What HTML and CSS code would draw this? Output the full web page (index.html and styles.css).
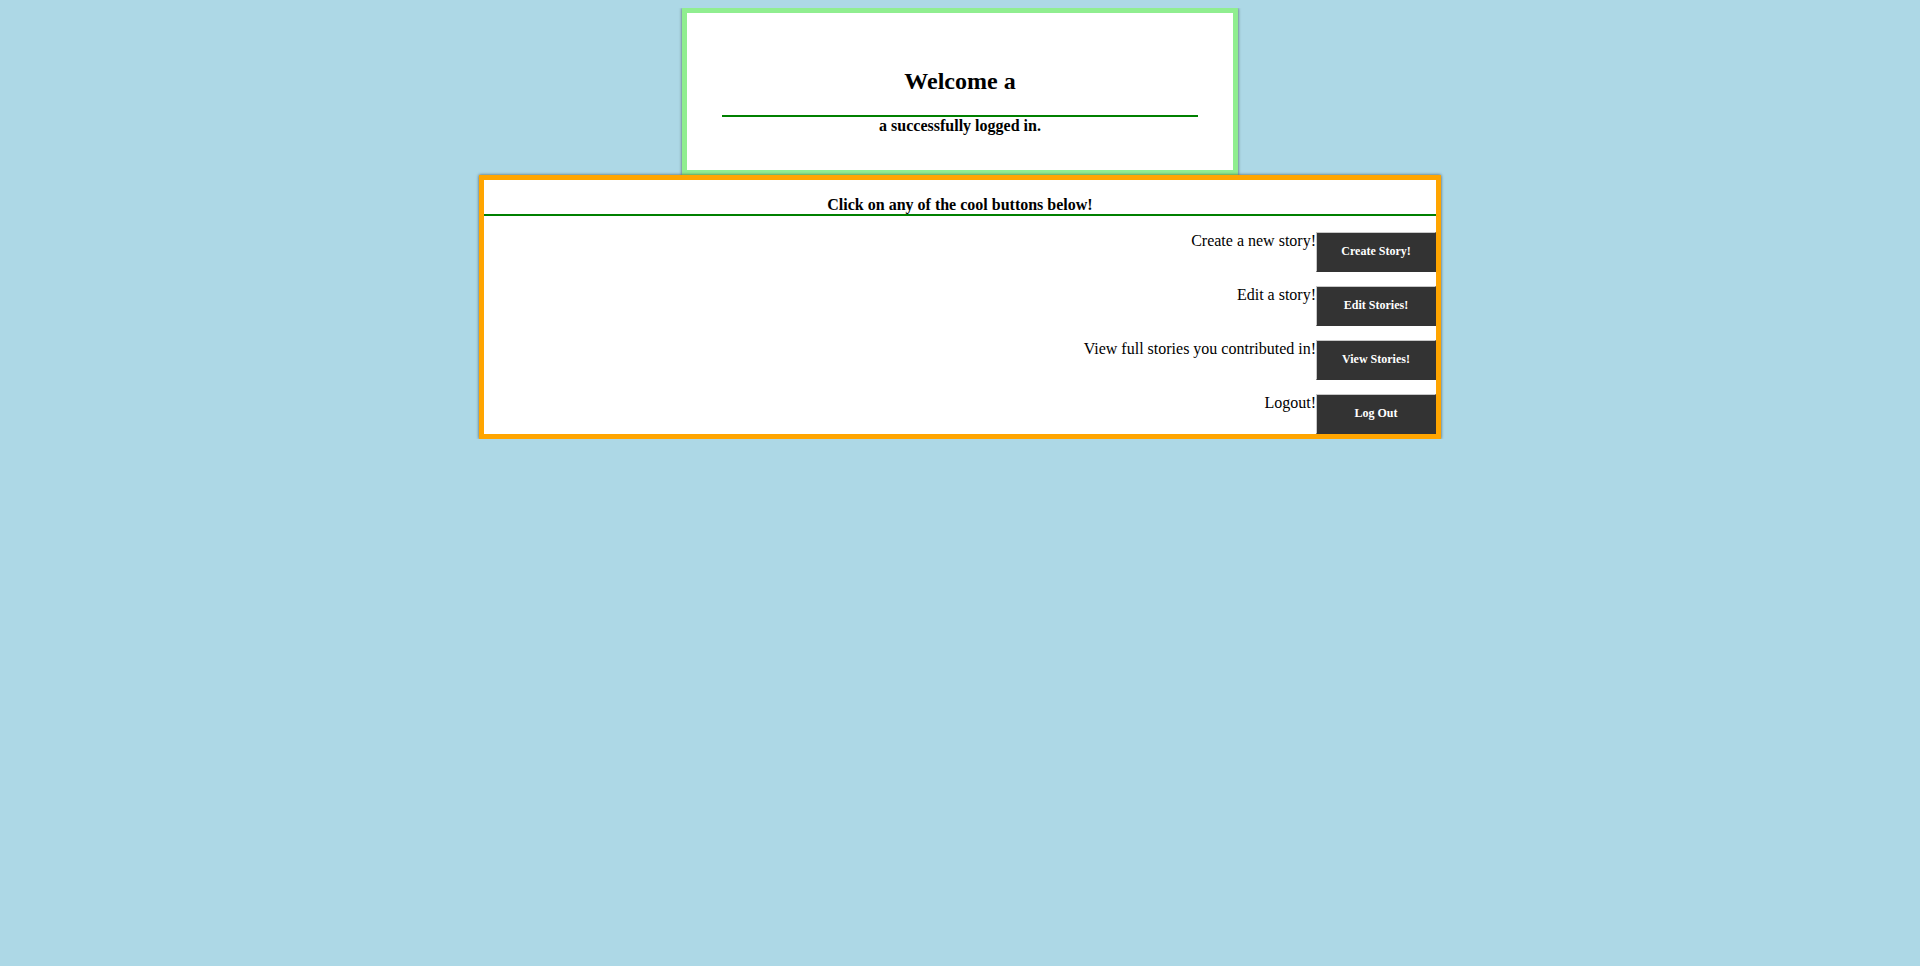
FILE: index.html
```html
<!DOCTYPE html>
<html lang="en">
<head>
<meta charset="utf-8">
<title>Welcome</title>
<link rel="stylesheet" href="styles.css">
</head>
<body>
  <div class="welcome">
    <h2 class="welcome-title">Welcome a</h2>
    <div class="welcome-rule"></div>
    <div class="welcome-sub">a successfully logged in.</div>
  </div>
  <div class="panel">
    <div class="panel-title">Click on any of the cool buttons below!</div>
    <div class="actions">
      <div class="action-row"><span class="action-label">Create a new story!</span><button class="action-btn">Create Story!</button></div>
      <div class="action-row"><span class="action-label">Edit a story!</span><button class="action-btn">Edit Stories!</button></div>
      <div class="action-row"><span class="action-label">View full stories you contributed in!</span><button class="action-btn">View Stories!</button></div>
      <div class="action-row"><span class="action-label">Logout!</span><button class="action-btn">Log Out</button></div>
    </div>
  </div>
</body>
</html>
```
FILE: styles.css
```css
html, body {
  background: #add8e6;
}
body {
  margin: 8px;
  font-family: "Liberation Serif", "Times New Roman", serif;
  font-size: 16px;
  color: #000;
}
.welcome {
  width: 25%;
  margin: 0 auto;
  padding: 35px;
  border: 5px solid #90ee90;
  background: #fff;
  box-shadow: 0 0 3px rgba(0, 0, 0, 0.6);
}
.welcome-title {
  margin: 19.92px 0;
  font-size: 24px;
  font-weight: bold;
  text-align: center;
}
.welcome-rule {
  border-top: 2px solid #008000;
}
.welcome-sub {
  font-weight: bold;
  text-align: center;
}
.panel {
  width: 50%;
  margin: 0 auto;
  border: 5px solid #ffa500;
  background: #fff;
  box-shadow: 0 0 3px rgba(0, 0, 0, 0.6);
}
.panel-title {
  margin: 16px 0;
  font-weight: bold;
  text-align: center;
  border-bottom: 2px solid #008000;
}
.actions {
  display: flex;
  flex-direction: column;
  gap: 14px;
}
.action-row {
  display: flex;
  justify-content: flex-end;
  align-items: flex-start;
}
.action-label {
  font-size: 16px;
}
.action-btn {
  width: 120px;
  height: 40px;
  padding: 0;
  background: #333;
  color: #fff;
  font-family: "Liberation Serif", "Times New Roman", serif;
  font-size: 12px;
  font-weight: bold;
  border-style: solid;
  border-width: 1px;
  border-color: #c8c8c8 #333 #333 #c8c8c8;
}
```
